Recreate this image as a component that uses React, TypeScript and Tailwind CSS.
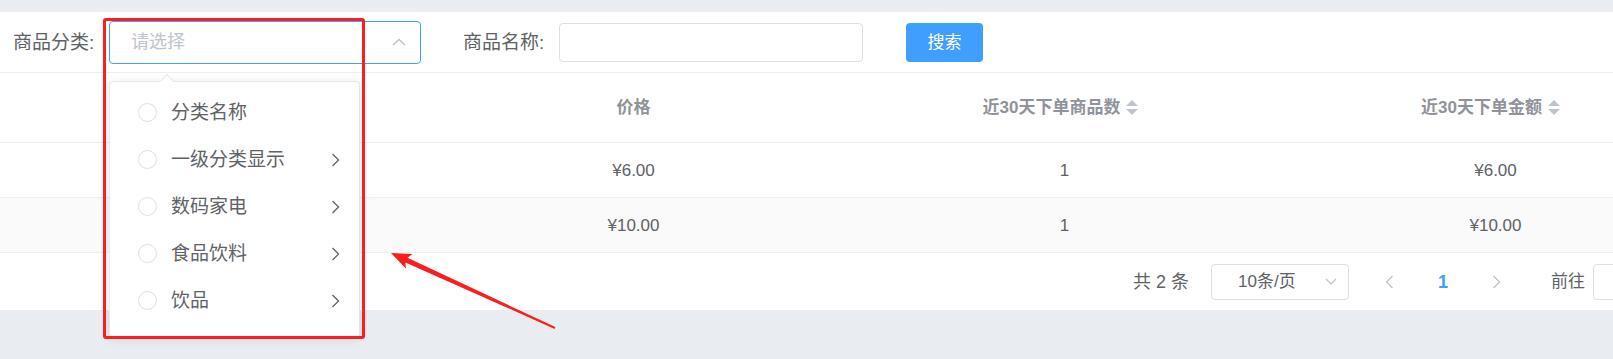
import React from "react";

function ChevronUp({ className }: { className?: string }) {
  return (
    <svg className={className} width="14" height="8" viewBox="0 0 14 8" fill="none">
      <polyline points="1,7 7,1.5 13,7" stroke="#c0c4cc" strokeWidth="1.4" />
    </svg>
  );
}

function ChevronDown({ className }: { className?: string }) {
  return (
    <svg className={className} width="12" height="7" viewBox="0 0 12 7" fill="none">
      <polyline points="1,1 6,6 11,1" stroke="#c0c4cc" strokeWidth="1.2" />
    </svg>
  );
}

function ChevronRight({ color = "#606266" }: { color?: string }) {
  return (
    <svg width="9" height="14" viewBox="0 0 9 14" fill="none">
      <polyline points="1.5,1 7.5,7 1.5,13" stroke={color} strokeWidth="1.3" />
    </svg>
  );
}

function ChevronLeft({ color = "#606266" }: { color?: string }) {
  return (
    <svg width="9" height="14" viewBox="0 0 9 14" fill="none">
      <polyline points="7.5,1 1.5,7 7.5,13" stroke={color} strokeWidth="1.3" />
    </svg>
  );
}

function SortCaret() {
  return (
    <span className="ml-[6px] inline-flex flex-col items-center gap-[3px]">
      <span className="h-0 w-0 border-x-[6px] border-b-[6px] border-x-transparent border-b-[#c0c4cc]" />
      <span className="h-0 w-0 border-x-[6px] border-t-[6px] border-x-transparent border-t-[#c0c4cc]" />
    </span>
  );
}

const items = [
  { label: "分类名称", arrow: false },
  { label: "一级分类显示", arrow: true },
  { label: "数码家电", arrow: true },
  { label: "食品饮料", arrow: true },
  { label: "饮品", arrow: true },
];

const rows = [
  { price: "¥6.00", count: "1", amount: "¥6.00", stripe: false },
  { price: "¥10.00", count: "1", amount: "¥10.00", stripe: true },
];

export default function App() {
  return (
    <div className="relative h-[359px] w-[1613px] overflow-hidden bg-[#e9ecf0] font-['Liberation_Sans','Noto_Sans_CJK_SC',sans-serif]">
      <div className="mt-[12px] h-[298px] w-[1760px] bg-white">
        {/* search form */}
        <div className="flex h-[61px] items-center border-b border-[#ebeef5] pl-[13px]">
          <span className="w-[83px] whitespace-nowrap text-[19px] leading-none text-[#606266]">商品分类:</span>
          <div className="ml-[13px] flex h-[43px] w-[312px] items-center justify-between rounded-[4px] border border-[#409eff] pl-[21px] pr-[14px]">
            <span className="text-[18px] leading-none text-[#c0c4cc]">请选择</span>
            <ChevronUp />
          </div>
          <span className="ml-[42px] w-[82px] whitespace-nowrap text-[19px] leading-none text-[#606266]">商品名称:</span>
          <div className="ml-[14px] h-[39px] w-[304px] rounded-[4px] border border-[#dcdfe6]" />
          <button className="ml-[43px] h-[39px] w-[77px] rounded-[4px] bg-[#409eff] text-[17px] leading-none text-white">
            搜索
          </button>
        </div>

        {/* table header */}
        <div className="grid h-[70px] grid-cols-[418px_431px_431px_431px] items-center border-b border-[#ebeef5] text-[17px] font-bold leading-none text-[#909399]">
          <div />
          <div className="text-center">价格</div>
          <div className="flex items-center justify-center pr-[8px]">
            <span>近30天下单商品数</span>
            <SortCaret />
          </div>
          <div className="flex items-center justify-center pr-[10px]">
            <span>近30天下单金额</span>
            <SortCaret />
          </div>
        </div>

        {/* table body */}
        {rows.map((r, i) => (
          <div
            key={i}
            className={`grid h-[55px] grid-cols-[418px_431px_431px_431px] items-center border-b border-[#ebeef5] text-[17px] leading-none text-[#606266] ${
              r.stripe ? "bg-[#fafafa]" : "bg-white"
            }`}
          >
            <div />
            <div className="text-center">{r.price}</div>
            <div className="text-center">{r.count}</div>
            <div className="text-center">{r.amount}</div>
          </div>
        ))}

        {/* pagination */}
        <div className="flex h-[57px] items-center pl-[1133px] text-[18px] leading-none text-[#606266]">
          <span className="w-[57px] whitespace-pre">共 2 条</span>
          <div className="ml-[21px] flex h-[36px] w-[138px] items-center justify-between rounded-[4px] border border-[#dcdfe6] pl-[26px] pr-[11px]">
            <span className="text-[17px]">10条/页</span>
            <ChevronDown />
          </div>
          <div className="ml-[20px] flex w-[40px] justify-center">
            <ChevronLeft color="#c0c4cc" />
          </div>
          <div className="ml-[14px] w-[40px] text-center font-bold text-[#409eff]">1</div>
          <div className="ml-[13px] flex w-[40px] justify-center">
            <ChevronRight color="#c0c4cc" />
          </div>
          <span className="ml-[35px] text-[17px]">前往</span>
          <div className="ml-[8px] h-[36px] w-[60px] rounded-[4px] border border-[#dcdfe6]" />
        </div>
      </div>

      {/* cascader dropdown */}
      <div className="absolute left-[109px] top-[81px] h-[256px] w-[251px] rounded-[4px] border border-[#e4e7ed] bg-white pb-[13px] pt-[7px] shadow-[0_2px_12px_rgba(0,0,0,0.1)]">
        <div className="absolute left-[52px] top-[-6px] h-[10px] w-[10px] rotate-45 border-l border-t border-[#e4e7ed] bg-white" />
        {items.map((it) => (
          <div key={it.label} className="flex h-[47px] items-center pl-[28px] pr-[19px]">
            <span className="h-[19px] w-[19px] rounded-full border border-[#dcdfe6] bg-white" />
            <span className="ml-[14px] flex-1 text-[19px] leading-none text-[#606266]">{it.label}</span>
            {it.arrow && <ChevronRight />}
          </div>
        ))}
      </div>

      {/* red annotation box */}
      <div className="pointer-events-none absolute left-[103px] top-[18px] h-[321px] w-[262px] rounded-[3px] border-[3px] border-[#fa1e1e]" />

      {/* red annotation arrow */}
      <svg className="pointer-events-none absolute left-0 top-0" width="1613" height="359" viewBox="0 0 1613 359">
        <polygon
          points="391,253 405.9,268.6 405.4,262.4 554.7,328.9 555.3,327.1 407.5,257.8 412.5,254"
          fill="#fa1e1e"
        />
      </svg>
    </div>
  );
}
